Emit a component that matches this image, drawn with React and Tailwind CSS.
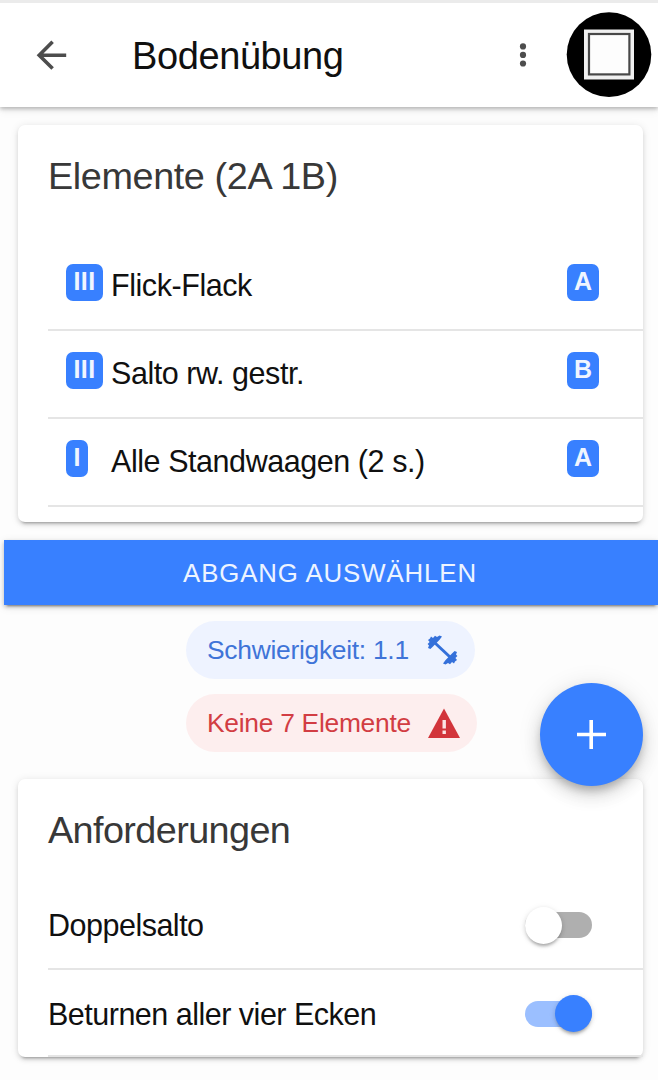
import React from "react";

const cardShadow =
  "shadow-[0_5px_3px_-4px_rgba(0,0,0,0.3),0_3px_4px_rgba(0,0,0,0.1),0_1px_9px_rgba(0,0,0,0.1)]";

function Badge({ children, className }) {
  return (
    <span
      className={`flex h-[37px] items-start justify-center rounded-[7px] bg-[#3880ff] pt-[3px] text-[25px] font-bold leading-[29px] text-[#f0f5ff] ${className}`}
    >
      {children}
    </span>
  );
}

function ElementRow({ group, name, value, groupClass }) {
  return (
    <li className="ml-[30px] flex h-[88px] items-center border-b-2 border-[#e5e5e5] pl-[18px] pr-[44px]">
      <div className="flex w-[45px] pb-[7px]">
        <Badge className={groupClass}>{group}</Badge>
      </div>
      <span className="flex-1 pb-[2px] text-[30.5px] leading-[34px] tracking-[-0.44px]">{name}</span>
      <div className="pb-[7px]">
        <Badge className="w-[32px]">{value}</Badge>
      </div>
    </li>
  );
}

function Toggle({ on }) {
  return (
    <div
      className={`mr-[51px] flex h-[26px] w-[67px] items-center rounded-full ${on ? "justify-end bg-[#9bbfff]" : "justify-start bg-[#afafaf]"}`}
    >
      <span
        className={`h-[37px] w-[37px] shrink-0 rounded-full shadow-[0_4px_3px_-2px_rgba(0,0,0,0.22),0_2px_4px_rgba(0,0,0,0.12),0_1px_7px_rgba(0,0,0,0.08)] ${on ? "bg-[#3880ff]" : "bg-white"}`}
      />
    </div>
  );
}

export default function App() {
  return (
    <div className="relative flex h-[1080px] w-[658px] flex-col overflow-hidden bg-[#fdfdfd] font-['Liberation_Sans',Arial,sans-serif] text-[#101010]">
      <header className="flex h-[107px] shrink-0 items-center border-t-[3px] border-[#ebebeb] bg-white pl-[36px] pr-[6px] shadow-[0_2px_4px_rgba(0,0,0,0.25),0_4px_9px_rgba(0,0,0,0.06)]">
        <svg className="h-[30px] w-[32px]" viewBox="0 0 32 30" fill="none" stroke="#4d4d4d" strokeWidth="3.6">
          <path d="M16.6 1.8 3.2 15.2 16.6 28.6M3.2 15.2H30.2" />
        </svg>
        <h1 className="ml-[64px] flex-1 pt-[2px] text-[38px] font-normal leading-[44px] tracking-[-0.4px]">Bodenübung</h1>
        <svg className="mr-[39px] h-[26px] w-[8px]" viewBox="0 0 8 26" fill="#4d4d4d">
          <circle cx="4" cy="4.4" r="3.1" />
          <circle cx="4" cy="12.9" r="3.1" />
          <circle cx="4" cy="21.5" r="3.1" />
        </svg>
        <svg className="h-[86px] w-[86px]" viewBox="0 0 86 86">
          <circle cx="43" cy="42.6" r="42.3" fill="#000" />
          <rect x="18" y="17.5" width="50" height="50" fill="#f0f0f0" />
          <rect x="23" y="22" width="40.4" height="40.4" fill="#fdfdfd" stroke="#484848" strokeWidth="2.2" />
        </svg>
      </header>

      <main className="flex flex-col">
        <section className={`ml-[18px] mt-[18px] h-[397px] w-[625px] rounded-[7px] bg-white ${cardShadow}`}>
          <h2 className="h-[118px] pl-[30px] pt-[30px] text-[37.8px] font-normal leading-[43px] tracking-[-0.4px] text-[#383838]">
            Elemente (2A 1B)
          </h2>
          <ul>
            <ElementRow group="III" groupClass="w-[37px] tracking-[0.4px]" name="Flick-Flack" value="A" />
            <ElementRow group="III" groupClass="w-[37px] tracking-[0.4px]" name="Salto rw. gestr." value="B" />
            <ElementRow group="I" groupClass="w-[22px]" name="Alle Standwaagen (2 s.)" value="A" />
          </ul>
        </section>

        <button className="ml-[4px] mt-[18px] h-[65px] bg-[#3880ff] pr-[2px] text-[25.8px] leading-[30px] tracking-[0.9px] text-[#edf4ff] shadow-[0_4px_2px_-3px_rgba(0,0,0,0.35),0_2px_4px_rgba(0,0,0,0.22),0_2px_9px_rgba(0,0,0,0.1)]">
          ABGANG AUSWÄHLEN
        </button>

        <div className="ml-[186px] mt-[16px] flex flex-col items-start gap-[15px] text-[26.4px] leading-[30px] tracking-[-0.28px]">
          <div className="flex h-[58px] w-[289px] items-center rounded-full bg-[#eef3ff] pl-[21px] text-[#3f74d8]">
            <span className="w-[220px]">Schwierigkeit: 1.1</span>
            <svg className="h-[30px] w-[31px]" viewBox="0 0 31 30" fill="#3470da">
              <path d="M8 8 23 22" stroke="#3470da" strokeWidth="3" />
              <path d="M1 5 3 3.6 4 1.6 6 3 8 .8 10 2 12.5 .6 15 1.4 12.6 4.8 6 11.5 3.4 14 1 13 2 10.4.6 9 2.6 7Z" />
              <path d="M30 25 28 26.4 27 28.4 25 27 23 29.2 21 28 18.5 29.4 16 28.6 18.4 25.2 25 18.5 27.6 16 30 17 29 19.6 30.4 21 28.4 23Z" />
            </svg>
          </div>
          <div className="flex h-[58px] w-[291px] items-center rounded-full bg-[#fdeeee] pl-[21px] text-[#d23d43]">
            <span className="w-[221px]">Keine 7 Elemente</span>
            <svg className="h-[30px] w-[33px]" viewBox="0 0 33 30">
              <path d="M16 .5 32 30H0Z" fill="#d2353b" />
              <path d="M16.2 12V20.5M16.2 22.5V26" stroke="#fbe4e4" strokeWidth="3.4" />
            </svg>
          </div>
        </div>

        <section className={`ml-[18px] mt-[27px] h-[278px] w-[625px] rounded-[7px] bg-white ${cardShadow}`}>
          <h2 className="h-[103px] pl-[30px] pt-[30px] text-[37.8px] font-normal leading-[43px] tracking-[-0.6px] text-[#383838]">
            Anforderungen
          </h2>
          <ul className="ml-[30px] text-[30.5px] leading-[34px] tracking-[-0.5px]">
            <li className="flex h-[88px] items-center justify-between border-b-2 border-[#e5e5e5]">
              <span>Doppelsalto</span>
              <Toggle />
            </li>
            <li className="flex h-[87px] items-center justify-between border-b-2 border-[#e5e5e5] pt-[2px]">
              <span>Beturnen aller vier Ecken</span>
              <Toggle on />
            </li>
          </ul>
        </section>
      </main>

      <button
        aria-label="Hinzufügen"
        className="absolute left-[540px] top-[683px] flex h-[103px] w-[103px] items-center justify-center rounded-full bg-[#3880ff] shadow-[0_6px_9px_-2px_rgba(0,0,0,0.22),0_10px_18px_rgba(0,0,0,0.12),0_2px_24px_rgba(0,0,0,0.1)]"
      >
        <svg className="h-[29px] w-[29px]" viewBox="0 0 29 29" stroke="#fff" strokeWidth="3.6">
          <path d="M14.2 0V29M0 14.5H29" />
        </svg>
      </button>
    </div>
  );
}
